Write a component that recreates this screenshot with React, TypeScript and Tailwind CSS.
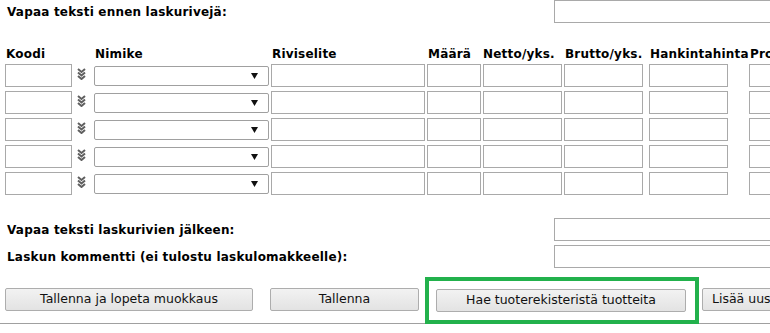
const ROWS = [0, 1, 2, 3, 4];

const HEADERS = [
  { label: "Koodi", w: "w-[89px]" },
  { label: "Nimike", w: "w-[177px]" },
  { label: "Riviselite", w: "w-[156px]" },
  { label: "Määrä", w: "w-[55px]" },
  { label: "Netto/yks.", w: "w-[82px]" },
  { label: "Brutto/yks.", w: "w-[85px]" },
  { label: "Hankintahinta", w: "w-[100px]" },
  { label: "Provisio", w: "w-[80px]" },
];

function TextBox({ className = "" }: { className?: string }) {
  return (
    <input
      type="text"
      className={`h-[23px] shrink-0 border border-[#a9a9a9] bg-white ${className}`}
    />
  );
}

function ExpandIcon() {
  return (
    <svg width="9" height="12" viewBox="0 0 9 12" className="shrink-0">
      {[0, 3.5, 7].map((y) => (
        <path
          key={y}
          d={`M1 ${y + 1} L4.5 ${y + 4} L8 ${y + 1}`}
          fill="none"
          stroke="#5f5f5f"
          strokeWidth="2"
        />
      ))}
    </svg>
  );
}

function Select() {
  return (
    <div className="flex h-[20px] w-[175px] shrink-0 items-center justify-end rounded-[2px] border border-[#a0a0a0] bg-white pr-[10px]">
      <svg width="7" height="6" viewBox="0 0 7 6">
        <path d="M0 0 H7 L3.5 6 Z" fill="#111" />
      </svg>
    </div>
  );
}

function Button({ label, className = "" }: { label: string; className?: string }) {
  return (
    <button
      type="button"
      className={`h-[23px] shrink-0 whitespace-nowrap rounded-[2px] border border-[#adadad] bg-gradient-to-b from-[#f2f2f2] to-[#e3e3e3] text-[12.5px] text-[#111] ${className}`}
    >
      {label}
    </button>
  );
}

export default function App() {
  return (
    <div className="h-[333px] w-[770px] overflow-hidden bg-white font-['Tahoma','DejaVu_Sans',sans-serif] text-black">
      <div className="flex h-[23px] items-center">
        <span className="w-[554px] shrink-0 pl-[7px] text-[12px] font-bold tracking-[0.2px]">
          Vapaa teksti ennen laskurivejä:
        </span>
        <TextBox className="w-[240px]" />
      </div>

      <div className="mt-[24px] flex pl-[6px] text-[12px] font-bold leading-[14px] tracking-[0.2px]">
        {HEADERS.map((h) => (
          <span key={h.label} className={`${h.w} shrink-0 whitespace-nowrap`}>
            {h.label}
          </span>
        ))}
      </div>

      <div className="mt-[3px] flex flex-col gap-[4px] pl-[5px]">
        {ROWS.map((r) => (
          <div key={r} className="flex items-center">
            <TextBox className="w-[67px]" />
            <div className="flex w-[22px] shrink-0 justify-center pb-[4px] pr-[3px]">
              <ExpandIcon />
            </div>
            <Select />
            <TextBox className="ml-[2px] w-[154px]" />
            <TextBox className="ml-[2px] w-[54px]" />
            <TextBox className="ml-[2px] w-[79px]" />
            <TextBox className="ml-[2px] w-[79px]" />
            <TextBox className="ml-[6px] w-[79px]" />
            <TextBox className="ml-[21px] w-[79px]" />
          </div>
        ))}
      </div>

      <div className="mt-[23px] flex flex-col gap-[4px]">
        <div className="flex items-center">
          <span className="w-[554px] shrink-0 pl-[7px] text-[12px] font-bold tracking-[0.2px]">
            Vapaa teksti laskurivien jälkeen:
          </span>
          <TextBox className="w-[240px]" />
        </div>
        <div className="flex items-center">
          <span className="w-[554px] shrink-0 pl-[7px] text-[12px] font-bold tracking-[0.2px]">
            Laskun kommentti (ei tulostu laskulomakkeelle):
          </span>
          <TextBox className="w-[240px]" />
        </div>
      </div>

      <div className="mt-[19px] flex items-center border-b border-[#a0a0a0] pb-[11px] pl-[5px]">
        <Button label="Tallenna ja lopeta muokkaus" className="w-[248px]" />
        <Button label="Tallenna" className="ml-[17px] w-[149px]" />
        <div className="relative ml-[17px] shrink-0">
          <Button label="Hae tuoterekisteristä tuotteita" className="w-[250px]" />
          <span className="pointer-events-none absolute -bottom-[12px] -left-[11px] -right-[13px] -top-[10px] border-[4px] border-[#22b14c]" />
        </div>
        <Button label="Lisää uusi rivi" className="ml-[16px] px-[9px]" />
      </div>
    </div>
  );
}
